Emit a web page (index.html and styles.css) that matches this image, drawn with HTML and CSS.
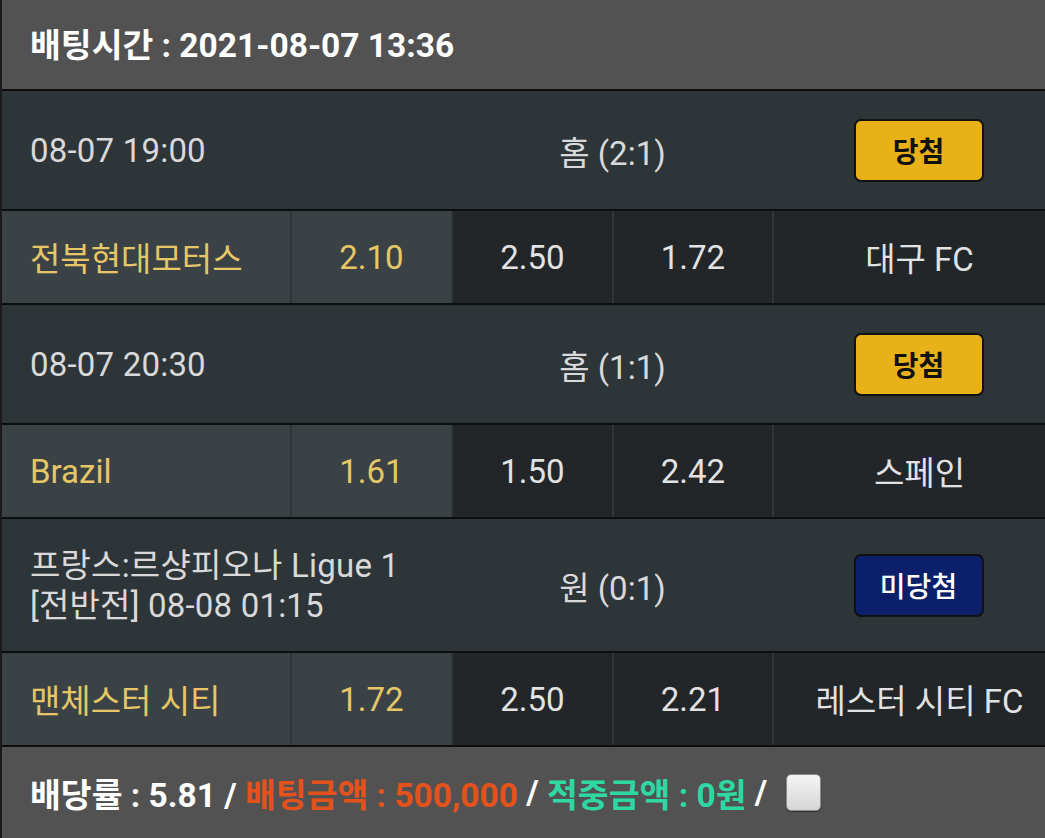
FILE: index.html
```html
<!DOCTYPE html>
<html lang="ko">
<head>
<meta charset="utf-8">
<link rel="stylesheet" href="styles.css">
</head>
<body>
<div class="board">
  <div class="head">배팅시간 : 2021-08-07 13:36</div>

  <div class="row info">
    <div class="time">08-07 19:00</div>
    <div class="result">홈 (2:1)</div>
    <div class="status"><span class="badge win">당첨</span></div>
  </div>
  <div class="row odds">
    <div class="team home">전북현대모터스</div>
    <div class="odd pick">2.10</div>
    <div class="odd">2.50</div>
    <div class="odd">1.72</div>
    <div class="team away">대구 FC</div>
  </div>

  <div class="row info">
    <div class="time">08-07 20:30</div>
    <div class="result">홈 (1:1)</div>
    <div class="status"><span class="badge win">당첨</span></div>
  </div>
  <div class="row odds">
    <div class="team home">Brazil</div>
    <div class="odd pick">1.61</div>
    <div class="odd">1.50</div>
    <div class="odd">2.42</div>
    <div class="team away">스페인</div>
  </div>

  <div class="row info tall">
    <div class="time">프랑스:르샹피오나 Ligue 1<br>[전반전] 08-08 01:15</div>
    <div class="result">원 (0:1)</div>
    <div class="status"><span class="badge lose">미당첨</span></div>
  </div>
  <div class="row odds">
    <div class="team home">맨체스터 시티</div>
    <div class="odd pick">1.72</div>
    <div class="odd">2.50</div>
    <div class="odd">2.21</div>
    <div class="team away">레스터 시티 FC</div>
  </div>

  <div class="foot">
    <span class="w">배당률 : 5.81 / </span><span class="bet">배팅금액 : 500,000</span><span class="w"> / </span><span class="hit">적중금액 : 0원</span><span class="w"> / </span><span class="check"></span>
  </div>
</div>
</body>
</html>
```

FILE: styles.css
```css
html, body {
  margin: 0;
  padding: 0;
  background: #525252;
}
body {
  font-family: Roboto, "Noto Sans CJK KR", sans-serif;
  width: 1045px;
  height: 838px;
  overflow: hidden;
}
.board {
  border-left: 2px solid #1a1a1a;
  height: 838px;
  box-sizing: border-box;
  display: flex;
  flex-direction: column;
}
.head {
  height: 89px;
  background: #525252;
  color: #ffffff;
  font-weight: 700;
  font-size: 33.5px;
  display: flex;
  align-items: center;
  padding-left: 28px;
  padding-bottom: 4px;
  box-sizing: border-box;
}
.row {
  display: grid;
  grid-template-columns: 288px 159px 159px 158px 1fr;
  column-gap: 2px;
  border-top: 2px solid #0e0e0e;
}
.info {
  height: 118px;
  background: #2e3539;
  color: #d9d9d9;
  font-size: 33px;
}
.info.tall {
  height: 132px;
}
.info > div {
  display: flex;
  align-items: center;
}
.time {
  grid-column: 1 / 3;
  padding-left: 28px;
  padding-top: 2px;
  line-height: 40px;
  letter-spacing: 0.2px;
}
.result {
  grid-column: 3 / 5;
  justify-content: center;
  padding-top: 2px;
}
.status {
  grid-column: 5;
  justify-content: center;
  padding-left: 18px;
}
.badge {
  box-sizing: border-box;
  width: 130px;
  height: 63px;
  border: 2px solid #111;
  border-radius: 7px;
  display: flex;
  align-items: center;
  justify-content: center;
  font-size: 28px;
  font-weight: 700;
}
.badge.win {
  background: #e8b118;
  color: #111;
}
.badge.lose {
  background: #0c1f6b;
  color: #ffffff;
  font-weight: 500;
}
.odds {
  height: 92px;
  background: #30373b;
  font-size: 33px;
  color: #e2e2e2;
}
.odds > div {
  display: flex;
  align-items: center;
  background: #222629;
}
.odds .home {
  background: #3a4245;
  color: #e6c666;
  padding-left: 28px;
}
.odds .odd {
  justify-content: center;
}
.odds .odd.pick {
  background: #3a4245;
  color: #e6c666;
}
.odds .away {
  justify-content: center;
  padding-left: 20px;
}
.foot {
  flex: 1;
  border-top: 2px solid #0e0e0e;
  background: #525252;
  display: flex;
  align-items: center;
  padding-left: 28px;
  font-size: 33.5px;
  font-weight: 700;
  white-space: pre;
}
.foot .w { color: #ffffff; }
.foot .bet { color: #e4521c; }
.foot .hit { color: #2ed8a2; }
.check {
  display: inline-block;
  width: 35px;
  height: 37px;
  margin-left: 10px;
  box-sizing: border-box;
  border: 1px solid #8a8a8a;
  border-radius: 5px;
  background: linear-gradient(#f4f4f4, #d6d6d6);
  box-shadow: 0 1px 1px rgba(0,0,0,0.4);
}
```
